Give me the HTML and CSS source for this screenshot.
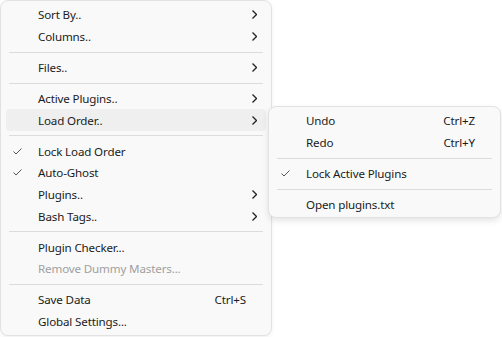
FILE: index.html
```html
<!DOCTYPE html>
<html lang="en">
<head>
    <meta charset="UTF-8">
    <title>Plugins Menu</title>
    <link rel="stylesheet" href="styles.css">
</head>
<body>
    <div class="menu main-menu">
        <div class="item"><span class="check"></span><span class="label">Sort By..</span><span class="key"></span><span class="arrow"><svg width="5" height="9" viewBox="0 0 5 9"><polyline points="0.5,0.5 4.5,4.5 0.5,8.5"/></svg></span></div>
        <div class="item"><span class="check"></span><span class="label">Columns..</span><span class="key"></span><span class="arrow"><svg width="5" height="9" viewBox="0 0 5 9"><polyline points="0.5,0.5 4.5,4.5 0.5,8.5"/></svg></span></div>
        <div class="sep"></div>
        <div class="item"><span class="check"></span><span class="label">Files..</span><span class="key"></span><span class="arrow"><svg width="5" height="9" viewBox="0 0 5 9"><polyline points="0.5,0.5 4.5,4.5 0.5,8.5"/></svg></span></div>
        <div class="sep"></div>
        <div class="item"><span class="check"></span><span class="label">Active Plugins..</span><span class="key"></span><span class="arrow"><svg width="5" height="9" viewBox="0 0 5 9"><polyline points="0.5,0.5 4.5,4.5 0.5,8.5"/></svg></span></div>
        <div class="item open"><span class="check"></span><span class="label">Load Order..</span><span class="key"></span><span class="arrow"><svg width="5" height="9" viewBox="0 0 5 9"><polyline points="0.5,0.5 4.5,4.5 0.5,8.5"/></svg></span></div>
        <div class="sep"></div>
        <div class="item"><span class="check"><svg width="9" height="7" viewBox="0 0 9 7"><polyline points="0.5,3.5 3,6 8.5,0.5"/></svg></span><span class="label">Lock Load Order</span><span class="key"></span><span class="arrow"></span></div>
        <div class="item"><span class="check"><svg width="9" height="7" viewBox="0 0 9 7"><polyline points="0.5,3.5 3,6 8.5,0.5"/></svg></span><span class="label">Auto-Ghost</span><span class="key"></span><span class="arrow"></span></div>
        <div class="item"><span class="check"></span><span class="label">Plugins..</span><span class="key"></span><span class="arrow"><svg width="5" height="9" viewBox="0 0 5 9"><polyline points="0.5,0.5 4.5,4.5 0.5,8.5"/></svg></span></div>
        <div class="item"><span class="check"></span><span class="label">Bash Tags..</span><span class="key"></span><span class="arrow"><svg width="5" height="9" viewBox="0 0 5 9"><polyline points="0.5,0.5 4.5,4.5 0.5,8.5"/></svg></span></div>
        <div class="sep"></div>
        <div class="item"><span class="check"></span><span class="label">Plugin Checker...</span><span class="key"></span><span class="arrow"></span></div>
        <div class="item disabled"><span class="check"></span><span class="label">Remove Dummy Masters...</span><span class="key"></span><span class="arrow"></span></div>
        <div class="sep"></div>
        <div class="item"><span class="check"></span><span class="label">Save Data</span><span class="key">Ctrl+S</span><span class="arrow"></span></div>
        <div class="item"><span class="check"></span><span class="label">Global Settings...</span><span class="key"></span><span class="arrow"></span></div>
    </div>

    <!-- submenu for Load Order.. -->
    <div class="menu sub-menu">
        <div class="item"><span class="check"></span><span class="label">Undo</span><span class="key">Ctrl+Z</span><span class="arrow"></span></div>
        <div class="item"><span class="check"></span><span class="label">Redo</span><span class="key">Ctrl+Y</span><span class="arrow"></span></div>
        <div class="sep"></div>
        <div class="item"><span class="check"><svg width="9" height="7" viewBox="0 0 9 7"><polyline points="0.5,3.5 3,6 8.5,0.5"/></svg></span><span class="label">Lock Active Plugins</span><span class="key"></span><span class="arrow"></span></div>
        <div class="sep"></div>
        <div class="item"><span class="check"></span><span class="label">Open plugins.txt</span><span class="key"></span><span class="arrow"></span></div>
    </div>
</body>
</html>
```

FILE: styles.css
```css
body {
    margin: 0;
    background-color: #fff;
    font-family: "Segoe UI", "Noto Sans", sans-serif;
    font-size: 11.6px;
    letter-spacing: -0.15px;
    color: #1b1b1b;
    position: relative;
    width: 502px;
    height: 337px;
    overflow: hidden;
}
.menu {
    background-color: #f9f9f9;
    border: 1px solid #e2e2e2;
    border-radius: 8px;
    box-sizing: border-box;
    padding: 3px 5px 2px 5px;
    box-shadow: 0 2px 4px rgba(0,0,0,0.06);
}
.main-menu {
    width: 272px;
    height: 336px;
}
.sub-menu {
    position: absolute;
    left: 268px;
    top: 106px;
    width: 233px;
    box-shadow: 0 3px 6px rgba(0,0,0,0.1);
}
.item {
    height: 21.7px;
    display: grid;
    grid-template-columns: 32px 1fr auto 20px;
    align-items: center;
    border-radius: 4px;
}
.item.open {
    background-color: #efefef;
}
.item.disabled {
    color: #a0a0a0;
}
.check {
    padding-left: 7px;
    display: flex;
}
.check svg polyline {
    fill: none;
    stroke: #555;
    stroke-width: 1;
}
.arrow {
    display: flex;
    padding-left: 6px;
}
.arrow svg polyline {
    fill: none;
    stroke: #222;
    stroke-width: 1.3;
}
.sep {
    height: 9.3px;
    display: flex;
    align-items: center;
    padding: 0 3px;
}
.sep::before {
    content: "";
    flex: 1;
    height: 1px;
    background-color: #dcdcdc;
}
```
